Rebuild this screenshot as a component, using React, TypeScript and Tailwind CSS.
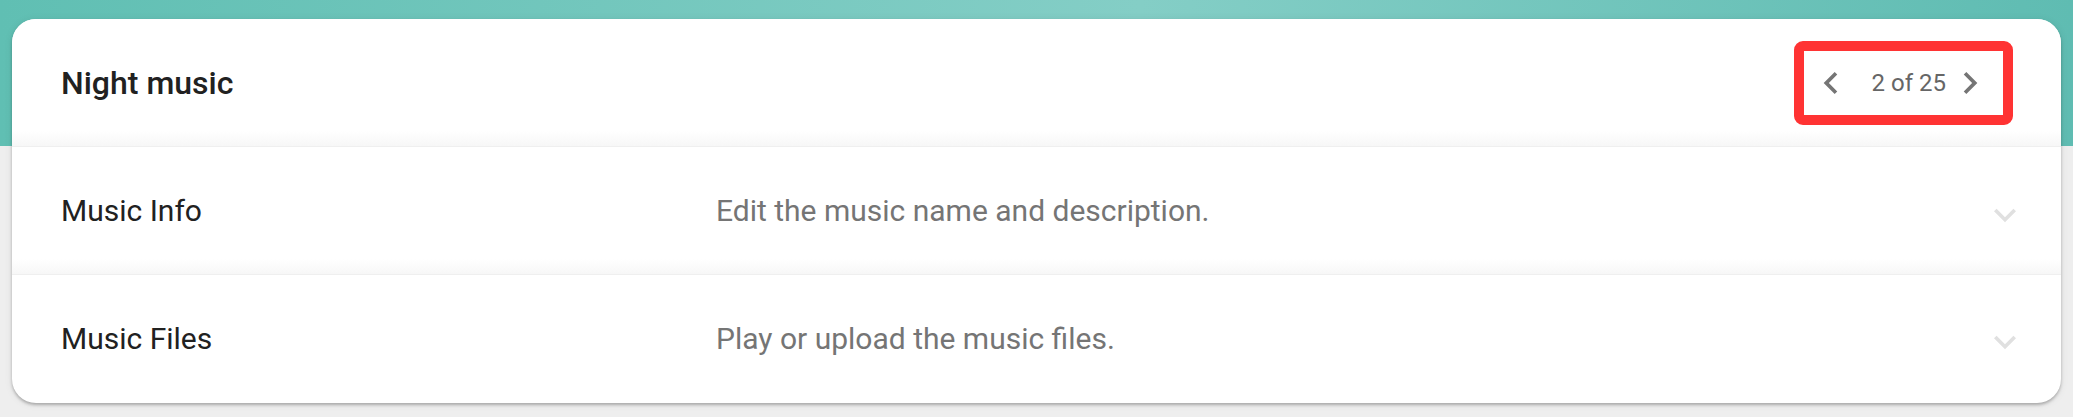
import React from 'react';

const ExpandMore: React.FC = () => (
  <svg viewBox="0 0 24 24" className="w-[44px] h-[44px] mt-2" fill="#e0e0e0" aria-hidden>
    <path d="M16.59 8.59 12 13.17 7.41 8.59 6 10l6 6 6-6z" />
  </svg>
);

const Row: React.FC<{ label: string; desc: string; last?: boolean }> = ({ label, desc, last }) => (
  <div
    className={[
      'flex items-center h-[128px] pl-[49px] pr-[34px]',
      last ? 'pb-[2px]' : 'border-b border-[#efefef] bg-[linear-gradient(to_bottom,#ffffff_88%,#f7f7f7)]',
    ].join(' ')}
  >
    <div className="w-[655px] shrink-0 text-[30px] text-[#212121]">{label}</div>
    <div className="flex-1 text-[30px] text-[#757575]">{desc}</div>
    <ExpandMore />
  </div>
);

export default function App() {
  return (
    <div className="min-h-[417px] w-full bg-[#eeeeee]" style={{ fontFamily: 'Roboto, "Liberation Sans", sans-serif' }}>
      {/* Teal band */}
      <div className="h-[146px] bg-[linear-gradient(to_right,#60bfb3,#84cec6_55%,#5fbcb2)]" />

      <div className="px-[12px] -mt-[127px] pb-[14px]">
        <div className="rounded-[24px] bg-white shadow-[0_2px_3px_rgba(0,0,0,0.25),0_1px_8px_rgba(0,0,0,0.08)] overflow-hidden">
          {/* Header */}
          <div className="flex items-center justify-between h-[128px] pl-[49px] pr-[48px] border-b border-[#efefef] bg-[linear-gradient(to_bottom,#ffffff_88%,#f7f7f7)]">
            <h1 className="text-[32px] font-medium text-[#212121]">Night music</h1>
            <div className="flex items-center h-[84px] border-[10px] border-[#ff3333] rounded-[9px] pl-[5px] pr-[11px]">
              <svg viewBox="0 0 24 24" className="w-[44px] h-[44px]" fill="#757575" aria-hidden>
                <path d="M15.41 7.41 14 6l-6 6 6 6 1.41-1.41L10.83 12z" />
              </svg>
              <span className="ml-[19px] mr-[2px] text-[24px] text-[#666666]">2 of 25</span>
              <svg viewBox="0 0 24 24" className="w-[44px] h-[44px]" fill="#757575" aria-hidden>
                <path d="M10 6 8.59 7.41 13.17 12l-4.58 4.59L10 18l6-6z" />
              </svg>
            </div>
          </div>

          <Row label="Music Info" desc="Edit the music name and description." />
          <Row label="Music Files" desc="Play or upload the music files." last />
        </div>
      </div>
    </div>
  );
}
